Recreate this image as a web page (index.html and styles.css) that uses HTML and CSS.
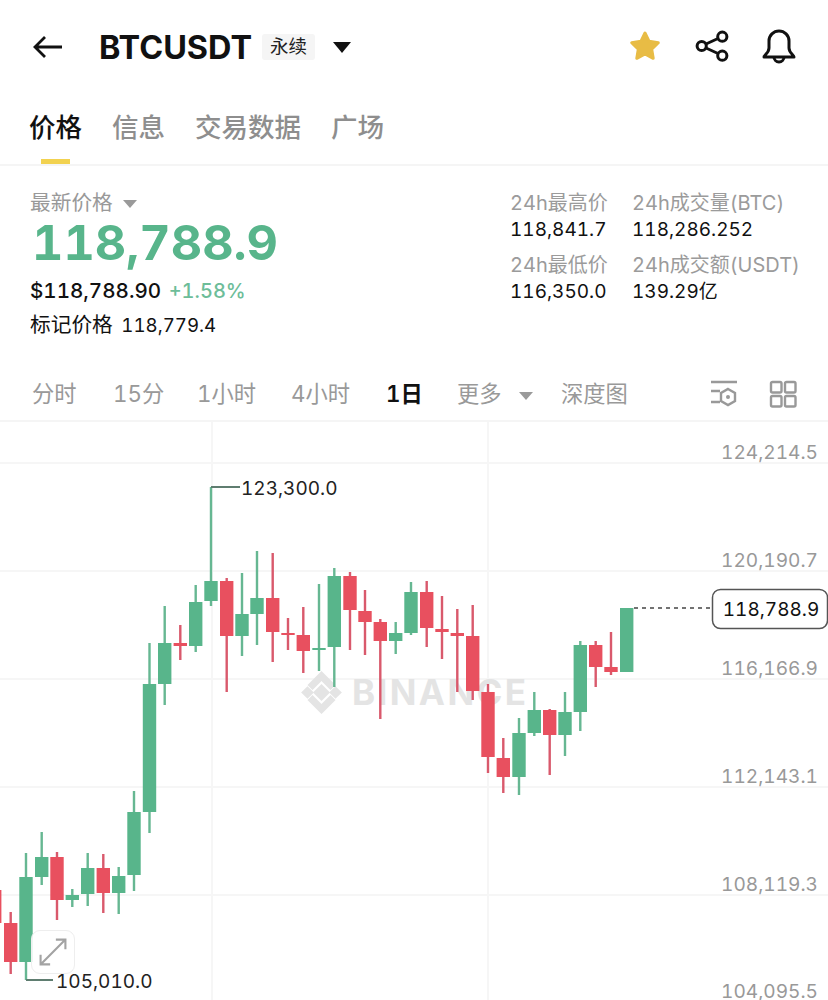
FILE: index.html
```html
<!DOCTYPE html>
<html lang="zh-CN">
<head>
  <meta charset="UTF-8" />
  <meta name="viewport" content="width=device-width, initial-scale=1.0"/>
  <title>BTCUSDT 永续</title>
  <link rel="stylesheet" href="styles.css">
</head>
<body>

  <header class="topbar">
    <svg class="back-icon" viewBox="0 0 30 24"><path d="M29 12H2M12 2L2 12l10 10"/></svg>
    <span class="symbol">BTCUSDT</span>
    <span class="tag">永续</span>
    <span class="caret caret-dark"></span>
    <div class="actions">
      <svg class="icon star" viewBox="0 0 36 36"><polygon points="18,4 22.1,12.3 31.3,13.7 24.7,20.2 26.2,29.3 18,25 9.8,29.3 11.3,20.2 4.7,13.7 13.9,12.3"/></svg>
      <svg class="icon line-icon" viewBox="0 0 36 36">
        <circle cx="6.7" cy="17" r="4.6"/><circle cx="27.3" cy="7.7" r="4.6"/><circle cx="27.3" cy="26.7" r="4.6"/>
        <path d="M11 15l12-5.5M11 19l12 5.5"/>
      </svg>
      <svg class="icon line-icon" viewBox="0 0 36 36">
        <path d="M3 28c0-2 5-4 5-9v-7a10 10 0 0 1 20 0v7c0 5 5 7 5 9z"/><path d="M13 28a5 5 0 0 0 10 0"/>
      </svg>
    </div>
  </header>

  <nav class="tabs">
    <a class="tab active">价格</a>
    <a class="tab">信息</a>
    <a class="tab">交易数据</a>
    <a class="tab">广场</a>
  </nav>

  <section class="stats">
    <div class="price-box">
      <div class="price-label">最新价格 <span class="caret caret-grey"></span></div>
      <div class="price">118,788.9</div>
      <div class="fiat">$118,788.90 <span class="change">+1.58%</span></div>
      <div class="mark"><span>标记价格</span> <span class="mark-value">118,779.4</span></div>
    </div>
    <div class="day-grid">
      <div class="cell"><div class="cell-label">24h最高价</div><div class="cell-value">118,841.7</div></div>
      <div class="cell"><div class="cell-label">24h成交量(BTC)</div><div class="cell-value">118,286.252</div></div>
      <div class="cell"><div class="cell-label">24h最低价</div><div class="cell-value">116,350.0</div></div>
      <div class="cell"><div class="cell-label">24h成交额(USDT)</div><div class="cell-value">139.29亿</div></div>
    </div>
  </section>

  <div class="intervals">
    <span class="interval">分时</span>
    <span class="interval">15分</span>
    <span class="interval">1小时</span>
    <span class="interval">4小时</span>
    <span class="interval current">1日</span>
    <span class="interval more">更多 <span class="caret caret-grey"></span></span>
    <span class="interval">深度图</span>
    <div class="tools">
      <svg class="tool" viewBox="0 0 30 30">
        <path d="M2 2h26M2 11h9M2 22h9"/>
        <polygon points="19,9 26,13 26,21 19,25 12,21 12,13"/>
        <circle class="dot" cx="19" cy="17" r="2"/>
      </svg>
      <svg class="tool" viewBox="0 0 30 30">
        <rect x="3" y="2" width="10.5" height="10.5" rx="1.5"/><rect x="17" y="2" width="10.5" height="10.5" rx="1.5"/>
        <rect x="3" y="16" width="10.5" height="10.5" rx="1.5"/><rect x="17" y="16" width="10.5" height="10.5" rx="1.5"/>
      </svg>
    </div>
  </div>

  <div class="chart">
    <!-- viewBox uses page coordinates so candle values read straight off the screenshot -->
    <svg class="chart-svg" viewBox="0 422 828 578">
      <g class="grid">
        <path d="M0 463H828M0 571H828M0 679H828M0 787H828M0 895H828M212 422V1000M488 422V1000"/>
      </g>

      <g class="watermark">
        <rect x="315.5" y="686.5" width="12" height="12" transform="rotate(45 321.5 692.5)"/>
        <rect x="303" y="688" width="9" height="9" transform="rotate(45 307.5 692.5)"/>
        <rect x="331" y="688" width="9" height="9" transform="rotate(45 335.5 692.5)"/>
        <path d="M321.5 671l14 14-5 5-9-9-9 9-5-5zM321.5 714l14-14-5-5-9 9-9-9-5 5z"/>
        <text x="352" y="705">BINANCE</text>
      </g>

      <g class="down">
        <path d="M-5 880V960M10.7 912V974M57 852V920M103.3 854V913M180.3 625V660M226.7 578V692M272.7 553V662M288 618V650M303.3 607V673M350 572V650M365 590V655M380.3 619V719M426.7 581V647M442 596V659M457.3 609V692M472.7 605V700M488 684V773M503.3 738V793M549.7 709V775M595.7 641V687M611 632V675"/>
        <rect x="-12" y="890" width="13.4" height="33"/>
        <rect x="4" y="923" width="13.4" height="39"/>
        <rect x="50.3" y="857" width="13.4" height="43"/>
        <rect x="96.6" y="868" width="13.4" height="25"/>
        <rect x="173.6" y="643" width="13.4" height="3"/>
        <rect x="220" y="581" width="13.4" height="55"/>
        <rect x="266" y="598" width="13.4" height="34"/>
        <rect x="281.3" y="633" width="13.4" height="2"/>
        <rect x="296.6" y="635" width="13.4" height="16"/>
        <rect x="343.3" y="576" width="13.4" height="34"/>
        <rect x="358.3" y="611" width="13.4" height="11"/>
        <rect x="373.6" y="622" width="13.4" height="19"/>
        <rect x="420" y="592" width="13.4" height="36"/>
        <rect x="435.3" y="629" width="13.4" height="3"/>
        <rect x="450.6" y="633" width="13.4" height="3"/>
        <rect x="466" y="636" width="13.4" height="55"/>
        <rect x="481.3" y="692" width="13.4" height="65"/>
        <rect x="496.6" y="758" width="13.4" height="19"/>
        <rect x="543" y="710" width="13.4" height="25"/>
        <rect x="589" y="645" width="13.4" height="22"/>
        <rect x="604.3" y="667" width="13.4" height="5"/>
      </g>

      <g class="up">
        <path d="M26 853V980M41.7 832V885M72.3 889V907M87.7 853V906M118.7 867V914M134 791V891M149.5 643V833M164.7 606V705M195.7 585V652M211 487V606M242 573V656M257 551V645M319 584V671M334.3 568V687M395.7 622V654M411 582V635M519 718V795M534.3 692V736M565 692V756M580.3 641V731"/>
        <rect x="19.3" y="877" width="13.4" height="85"/>
        <rect x="35" y="857" width="13.4" height="20"/>
        <rect x="65.6" y="895" width="13.4" height="5"/>
        <rect x="81" y="868" width="13.4" height="26"/>
        <rect x="112" y="876" width="13.4" height="17"/>
        <rect x="127.3" y="812" width="13.4" height="63"/>
        <rect x="142.8" y="684" width="13.4" height="128"/>
        <rect x="158" y="643" width="13.4" height="41"/>
        <rect x="189" y="602" width="13.4" height="44"/>
        <rect x="204.3" y="581" width="13.4" height="20"/>
        <rect x="235.3" y="614" width="13.4" height="22"/>
        <rect x="250.3" y="598" width="13.4" height="16"/>
        <rect x="312.3" y="648" width="13.4" height="2"/>
        <rect x="327.6" y="576" width="13.4" height="71"/>
        <rect x="389" y="633" width="13.4" height="8"/>
        <rect x="404.3" y="592" width="13.4" height="41"/>
        <rect x="512.3" y="733" width="13.4" height="44"/>
        <rect x="527.6" y="710" width="13.4" height="23"/>
        <rect x="558.3" y="712" width="13.4" height="23"/>
        <rect x="573.6" y="645" width="13.4" height="67"/>
        <rect x="620" y="608" width="13.4" height="64"/>
      </g>

      <path class="callout" d="M211 487H240M26 980H53"/>
      <text class="callout-text" x="241" y="495">123,300.0</text>
      <text class="callout-text" x="56" y="988">105,010.0</text>

      <g class="axis">
        <text x="818" y="459">124,214.5</text>
        <text x="818" y="567">120,190.7</text>
        <text x="818" y="675">116,166.9</text>
        <text x="818" y="783">112,143.1</text>
        <text x="818" y="891">108,119.3</text>
        <text x="818" y="998">104,095.5</text>
      </g>

      <path class="last-line" d="M634 608H712"/>
      <rect class="last-box" x="712.5" y="589.5" width="115" height="39" rx="8"/>
      <text class="last-text" x="771" y="615.5">118,788.9</text>
    </svg>

    <div class="expand">
      <svg viewBox="0 0 44 44"><path d="M9 35L35 9M25 9h10v10M9 25v10h10"/></svg>
    </div>
  </div>

</body>
</html>
```

FILE: styles.css
```css
/* Reset and Base */
* {
  box-sizing: border-box;
  margin: 0;
  padding: 0;
}

body {
  font-family: Inter, "Noto Sans CJK SC", sans-serif;
  font-feature-settings: "tnum";
  background: #fff;
  color: #111;
  height: 1000px;
  overflow: hidden;
}

.caret {
  display: inline-block;
  width: 0;
  height: 0;
  border-style: solid;
  border-color: transparent;
  border-bottom-width: 0;
}

.caret-dark {
  border-width: 11px 9px 0;
  border-top-color: #111;
  margin-left: 18px;
}

.caret-grey {
  border-width: 8px 7px 0;
  border-top-color: #9a9a9a;
  margin-left: 5px;
  vertical-align: middle;
}

/* Top bar */
.topbar {
  display: flex;
  align-items: center;
  height: 94px;
  padding-left: 33px;
}

.back-icon {
  width: 30px;
  height: 24px;
  fill: none;
  stroke: #111;
  stroke-width: 2.8;
}

.symbol {
  margin-left: 36px;
  font-size: 32.4px;
  font-weight: 700;
}

.tag {
  margin-left: 10px;
  padding: 0 8px;
  height: 26px;
  line-height: 25px;
  font-size: 18.5px;
  border-radius: 3px;
  background: #f5f5f5;
  color: #222;
}

.actions {
  display: flex;
  gap: 30px;
  margin-left: auto;
  padding-right: 31px;
}

.icon {
  width: 36px;
  height: 36px;
}

.star {
  fill: #e8bc45;
  stroke: #e8bc45;
  stroke-width: 3;
  stroke-linejoin: round;
  margin-right: 2px;
}

.line-icon {
  fill: none;
  stroke: #111;
  stroke-width: 3;
  stroke-linejoin: round;
}

/* Tabs */
.tabs {
  display: flex;
  gap: 30px;
  height: 72px;
  padding: 14px 0 0 29px;
  border-bottom: 2px solid #f5f5f5;
}

.tab {
  position: relative;
  font-size: 26.5px;
  line-height: 38px;
  font-weight: 500;
  color: #8e8e8e;
}

.tab.active {
  color: #111;
}

.tab.active::after {
  content: "";
  position: absolute;
  left: 12px;
  bottom: 0;
  width: 29px;
  height: 5px;
  background: #f2d250;
}

/* Price stats */
.stats {
  display: flex;
  justify-content: space-between;
  height: 190px;
  padding: 22px 1px 0 30px;
}

.price-label {
  font-size: 20.7px;
  line-height: 30px;
  color: #999;
}

.price {
  margin: 2px 0 0 2px;
  font-size: 48.6px;
  line-height: 46px;
  font-weight: 700;
  color: #58b58b;
}

.fiat {
  margin-top: 10px;
  font-size: 20.6px;
  line-height: 30px;
  font-weight: 500;
}

.change {
  margin-left: 2px;
  font-size: 20px;
  color: #6dbd99;
}

.mark {
  margin-top: 4px;
  font-size: 20.7px;
  line-height: 30px;
}

.mark-value {
  margin-left: 3px;
  font-size: 18.7px;
}

.day-grid {
  display: grid;
  grid-template-columns: 122px 195px;
  grid-auto-rows: 62px;
  margin-top: 1px;
}

.cell-label {
  font-size: 20px;
  line-height: 28px;
  color: #9b9b9b;
  white-space: nowrap;
}

.cell-value {
  font-size: 19px;
  line-height: 26px;
}

/* Interval bar */
.intervals {
  display: grid;
  grid-template-columns: 81px 84px 94px 95px 71px 104px auto 1fr;
  align-items: center;
  height: 66px;
  padding: 8px 0 0 32px;
  font-size: 22.3px;
  color: #999;
  border-bottom: 2px solid #f5f5f5;
}

.interval {
  white-space: nowrap;
}

.interval.current {
  color: #111;
  font-weight: 600;
}

.interval.more .caret {
  margin-left: 11px;
}

.tools {
  display: flex;
  gap: 29px;
  justify-self: end;
  margin-top: 6px;
  padding-right: 30px;
}

.tool {
  width: 30px;
  height: 30px;
  fill: none;
  stroke: #999;
  stroke-width: 2.4;
}

.tool .dot {
  fill: #999;
  stroke: none;
}

/* Chart */
.chart {
  position: relative;
  height: 578px;
}

.chart-svg {
  display: block;
  width: 828px;
  height: 578px;
}

.grid path {
  fill: none;
  stroke: #f6f6f6;
  stroke-width: 2;
}

.watermark {
  fill: #e4e4e4;
}

.watermark text {
  font-size: 35px;
  font-weight: 700;
  letter-spacing: 2.4px;
}

.up {
  fill: #58b58b;
  stroke: none;
}

.down {
  fill: #e8505f;
  stroke: none;
}

.up path,
.down path {
  fill: none;
  stroke-width: 2.4;
}

.up path {
  stroke: #66b792;
}

.down path {
  stroke: #d9596c;
}

.callout {
  fill: none;
  stroke: #5f7d70;
  stroke-width: 1.8;
}

.callout-text {
  font-size: 19px;
  fill: #222;
}

.axis text {
  font-size: 19.1px;
  fill: #999;
  text-anchor: end;
}

.last-line {
  fill: none;
  stroke: #444;
  stroke-width: 1.5;
  stroke-dasharray: 4 4;
}

.last-box {
  fill: #fff;
  stroke: #555;
  stroke-width: 1.5;
}

.last-text {
  font-size: 19px;
  fill: #111;
  text-anchor: middle;
}

.expand {
  position: absolute;
  left: 31px;
  top: 508px;
  width: 44px;
  height: 44px;
  border: 1px solid #eeeeee;
  border-radius: 9px;
  background: rgba(255, 255, 255, 0.85);
}

.expand svg {
  display: block;
  width: 100%;
  height: 100%;
  fill: none;
  stroke: #a3a3a3;
  stroke-width: 2.2;
}
```
